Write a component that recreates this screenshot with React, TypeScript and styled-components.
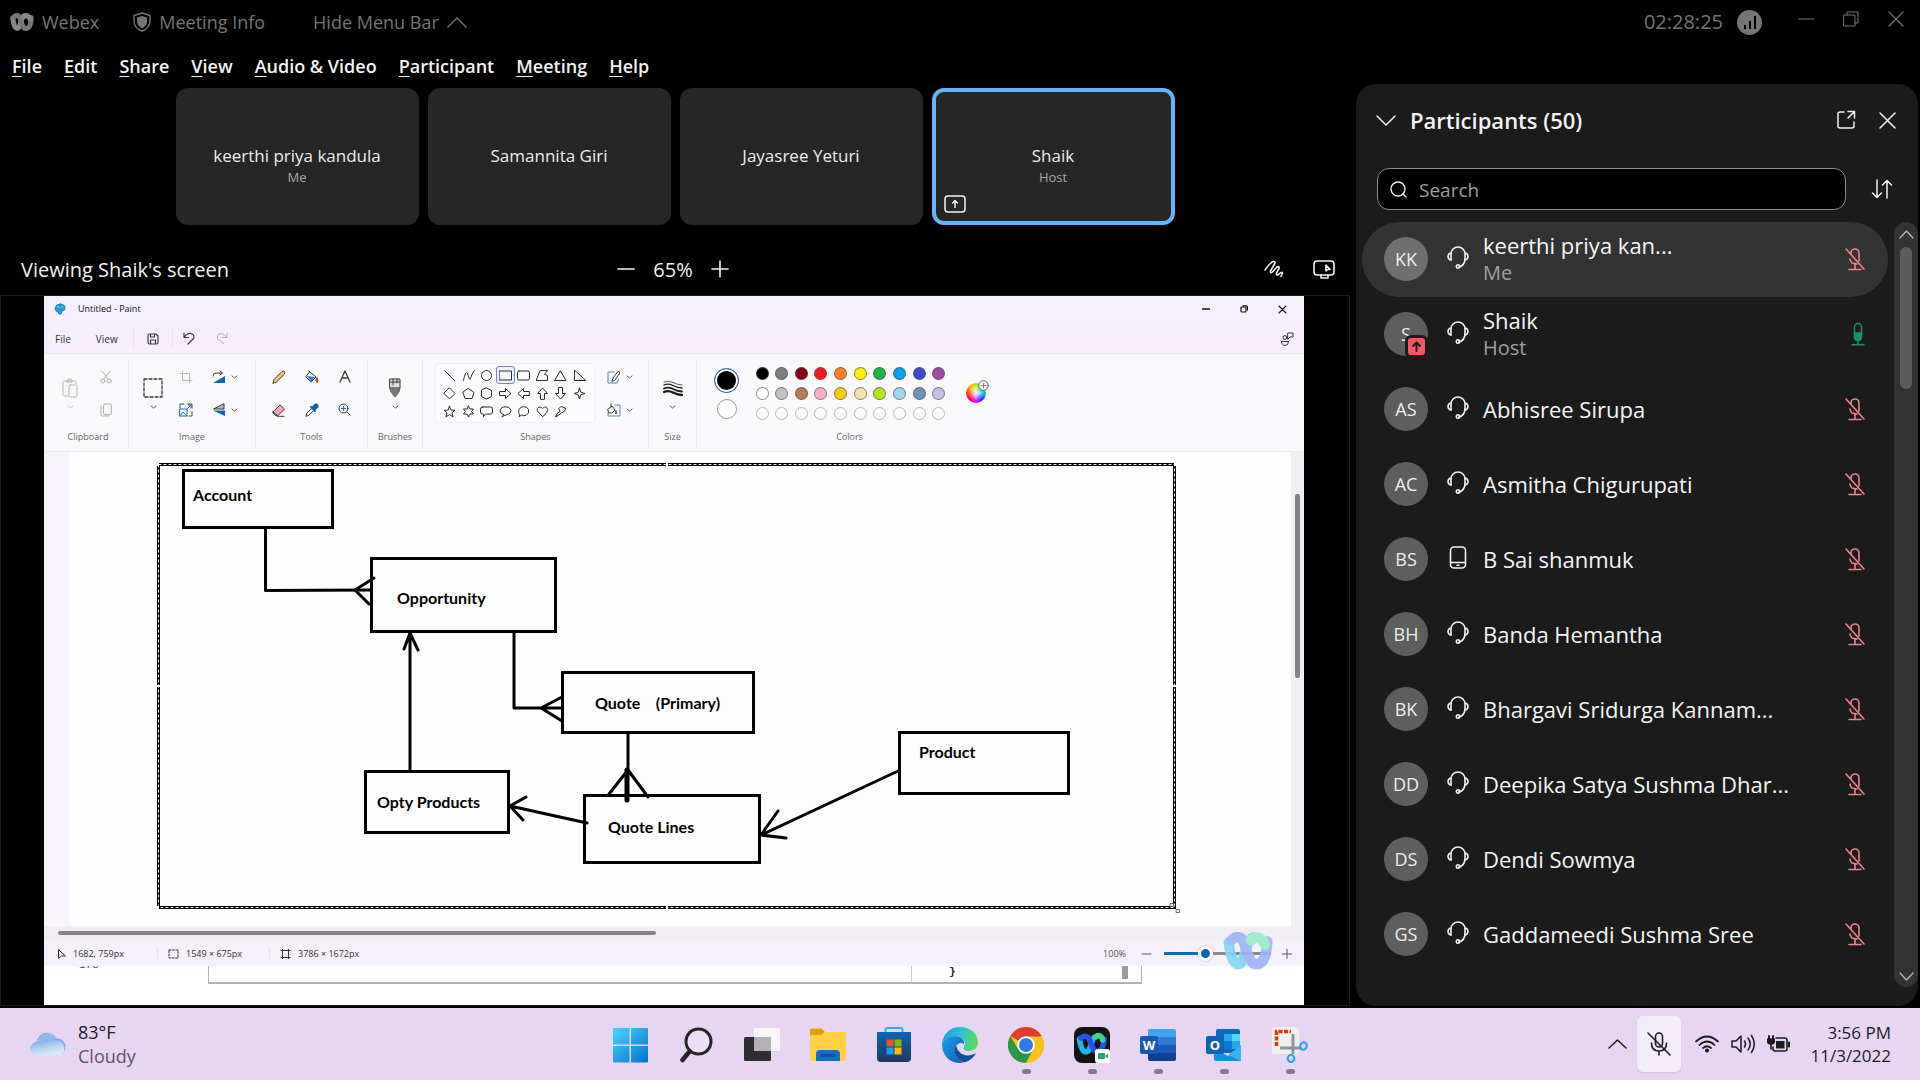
import React from 'react';
import styled, { createGlobalStyle } from 'styled-components';

const GlobalStyle = createGlobalStyle`
  *, *::before, *::after { box-sizing: border-box; }
  body { margin: 0; background: #000; font-family: "Open Sans", "Noto Sans", sans-serif; }
  button { font: inherit; color: inherit; background: none; border: 0; padding: 0; margin: 0; cursor: pointer; }
  svg { display: block; flex: none; }
  ul { list-style: none; margin: 0; padding: 0; }
`;

/* ---------- icons ---------- */

type IconProps = {
  w: number;
  h?: number;
  box?: string;
  sw?: number;
  color?: string;
  children: React.ReactNode;
};

const Icon = ({ w, h = w, box, sw = 1, color = 'currentColor', children }: IconProps) => (
  <svg
    width={w}
    height={h}
    viewBox={box ?? `0 0 ${w} ${h}`}
    fill="none"
    stroke={color}
    strokeWidth={sw}
    strokeLinecap="round"
    strokeLinejoin="round"
    aria-hidden="true"
  >
    {children}
  </svg>
);

const Chevron = ({ w, h, up, sw = 1 }: { w: number; h: number; up?: boolean; sw?: number }) => (
  <Icon w={w} h={h} sw={sw}>
    <path d={up ? `M1 ${h - 1}L${w / 2} 1L${w - 1} ${h - 1}` : `M1 1L${w / 2} ${h - 1}L${w - 1} 1`} />
  </Icon>
);

const Cross = ({ s, sw = 1 }: { s: number; sw?: number }) => (
  <Icon w={s} sw={sw}>
    <path d={`M1 1L${s - 1} ${s - 1}M${s - 1} 1L1 ${s - 1}`} />
  </Icon>
);

const WebexMark = ({ size, flat }: { size: number; flat?: boolean }) => (
  <svg width={size} height={(size * 3) / 4} viewBox="0 0 48 36" fill="none" strokeWidth="10" strokeLinecap="round" aria-hidden="true">
    <path d="M5.500 10C7 24 10 31 15 31C21 31 22 5 30 5" stroke={flat ? '#8a8a8a' : '#7ed8f5'} />
    <path d="M8 8C12 3 18 4 20 10C24 22 26 31 32 31C39 31 42 22 42.500 9" stroke={flat ? '#777' : '#9db4fa'} />
    <path d="M27 8C30 4 37 4 40 12" stroke={flat ? '#8a8a8a' : '#98eec8'} />
  </svg>
);

const HeadsetIcon = () => (
  <Icon w={22} h={24} sw={1.6} color="#f2f2f2">
    <path d="M4 15V9a7 7 0 0 1 14 0v4c0 5-2 8-6 9" />
    <path d="M4 8c-4 1-4 6 0 7M18 8c4 1 4 6 0 7" />
    <circle cx="11" cy="21.500" r="1.700" />
  </Icon>
);

const PhoneIcon = () => (
  <Icon w={22} h={24} sw={1.6} color="#f2f2f2">
    <rect x="3.500" y="2" width="15" height="21" rx="3.500" />
    <path d="M4 17.500h14M10 20.300h2" />
  </Icon>
);

const MicOffIcon = () => (
  <Icon w={22} h={24} sw={1.6} color="#f0808c">
    <path d="M2 2L20 22M7 7V6a4 4 0 0 1 8 0v8M6 12c0 2 1 3 2 4l5 1M11 17v5M5 22.500h12" />
  </Icon>
);

const MicOnIcon = () => (
  <Icon w={16} h={24} sw={1.5} color="#1c8f67">
    <rect x="4.500" y="1.500" width="7" height="17" rx="3.500" />
    <path d="M4.500 11h7v4a3.500 3.500 0 0 1-7 0z" fill="#1c8f67" />
    <path d="M8 18.500v4M2 22.800h12" />
  </Icon>
);

/* ---------- meeting shell ---------- */

const Shell = styled.div`
  min-height: 100vh;
  display: flex;
  flex-direction: column;
  background: #000;
  color: #f2f2f2;
`;

const TitleBar = styled.header`
  height: 48px;
  padding: 0 16px 4px 10px;
  display: flex;
  align-items: center;
  color: #757575;
  font-size: 18px;
`;

const TitleItem = styled.button<{ $gap: number }>`
  display: flex;
  align-items: center;
  gap: 8px;
  margin-right: ${(p) => p.$gap}px;
`;

const Clock = styled.time`
  margin-left: auto;
  font-size: 20px;
  line-height: 24px;
`;

const WindowButtons = styled.div`
  display: flex;
  gap: 29px;
  margin-left: 36px;
  padding-bottom: 6px;
  button { display: grid; place-items: center; }
`;

const Signal = styled.span`
  width: 25px;
  height: 25px;
  margin-left: 14px;
  padding-bottom: 6px;
  border-radius: 50%;
  background: #757575;
  display: flex;
  justify-content: center;
  align-items: flex-end;
  gap: 3px;
`;

const SignalBar = styled.i<{ $h: number }>`
  width: 2px;
  height: ${(p) => p.$h}px;
  background: #000;
`;

const MenuBar = styled.nav`
  height: 36px;
  padding: 0 12px;
  display: flex;
  align-items: center;
  gap: 22px;
  font-size: 18px;
  font-weight: 600;
`;

const Hot = styled.span`
  text-decoration: underline;
  text-underline-offset: 3px;
`;

const Body = styled.div`
  flex: 1;
  display: flex;
  gap: 6px;
  padding: 0 2px 2px 0;
`;

const Stage = styled.main`
  flex: 1;
  min-width: 0;
  display: flex;
  flex-direction: column;
`;

const Strip = styled.ul`
  display: flex;
  justify-content: center;
  gap: 9px;
  padding-top: 4px;
`;

const Tile = styled.li<{ $active?: boolean }>`
  position: relative;
  width: 243px;
  height: 137px;
  padding-bottom: 2px;
  border-radius: 12px;
  border: 4px solid ${(p) => (p.$active ? '#64b4fa' : '#262626')};
  background: #262626;
  display: flex;
  flex-direction: column;
  align-items: center;
  justify-content: center;
`;

const TileName = styled.span`
  font-size: 17px;
  line-height: 22px;
  font-weight: 500;
  color: #ededed;
`;

const TileRole = styled.span`
  height: 0;
  font-size: 13px;
  line-height: 20px;
  font-weight: 500;
  color: #a8a8a8;
`;

const TileBadge = styled.span`
  position: absolute;
  left: 8px;
  bottom: 8px;
`;

const ViewBar = styled.div`
  height: 70px;
  padding: 18px 15px 0 21px;
  display: grid;
  grid-template-columns: 1fr auto 1fr;
  align-items: center;
  font-size: 20px;
  font-weight: 500;
`;

const ZoomGroup = styled.div`
  display: flex;
  align-items: center;
  gap: 18px;
  margin-right: 10px;
`;

const ViewTools = styled.div`
  display: flex;
  justify-content: flex-end;
  align-items: center;
  gap: 29px;
`;

const ShareFrame = styled.section`
  flex: 1;
  border: 1px solid #1a1a1a;
  padding: 0 45px 0 43px;
  display: flex;
`;

/* ---------- paint window ---------- */

const Paint = styled.div`
  flex: 1;
  min-width: 0;
  display: flex;
  flex-direction: column;
  background: #fff;
  color: #333;
  font-size: 9px;
  line-height: 12px;
`;

const PaintTitle = styled.div`
  height: 26px;
  padding: 0 17px 0 10px;
  display: flex;
  align-items: center;
  gap: 12px;
  background: #f6f0fc;
  color: #111;
`;

const PaintWindowButtons = styled.div`
  margin-left: auto;
  display: flex;
  align-items: center;
  gap: 30px;
`;

const PaintMenu = styled.div`
  height: 32px;
  padding: 2px 10px 0 11px;
  display: flex;
  align-items: center;
  background: #f6eefa;
  border-bottom: 1px solid #ebe3ee;
`;

const PaintTab = styled.button`
  margin-right: 25px;
  font-size: 10px;
`;

const QuickButton = styled.button<{ $dim?: boolean }>`
  width: 33px;
  height: 20px;
  display: grid;
  place-items: center;
  color: ${(p) => (p.$dim ? '#b5aeb8' : '#3f3a42')};
`;

const SaveButton = styled(QuickButton)`
  width: 40px;
  margin-left: -10px;
  border: solid #eae1ef;
  border-width: 0 1px;
`;

const Push = styled.button`
  margin-left: auto;
`;

const Ribbon = styled.div`
  height: 98px;
  padding-top: 6px;
  display: flex;
  background: #f9f8fa;
  border-bottom: 1px solid #ecebf0;
`;

const Group = styled.section<{ $w: number; $pad?: number; $last?: boolean }>`
  width: ${(p) => p.$w}px;
  height: 88px;
  padding-left: ${(p) => p.$pad ?? 0}px;
  display: flex;
  flex-direction: column;
  align-items: center;
  border-right: 1px solid ${(p) => (p.$last ? 'transparent' : '#ebebee')};
`;

const GroupTools = styled.div`
  height: 66px;
  display: flex;
  align-items: center;
  justify-content: center;
`;

const GroupLabel = styled.span`
  line-height: 22px;
  color: #666;
`;

const ToolColumn = styled.div<{ $w: number }>`
  width: ${(p) => p.$w}px;
  display: grid;
  grid-auto-rows: 33px;
`;

const Tool = styled.button<{ $dim?: boolean }>`
  display: flex;
  align-items: center;
  justify-content: center;
  gap: 5px;
  color: ${(p) => (p.$dim ? '#b4b4b4' : '#3a3a3a')};
`;

const BigTool = styled(Tool)<{ $w: number }>`
  width: ${(p) => p.$w}px;
  flex-direction: column;
  gap: 7px;
`;

const ShapeBox = styled.div`
  width: 160px;
  height: 60px;
  margin-right: 8px;
  padding: 2px 5px 4px;
  display: grid;
  grid-template-columns: repeat(8, 1fr);
  grid-auto-rows: 18px;
  border: 1px solid #f0eef2;
  border-radius: 3px;
  background: #fcfbfd;
`;

const ShapeButton = styled.button<{ $on?: boolean }>`
  display: grid;
  place-items: center;
  color: #2d2d2d;
  border-radius: 3px;
  border: 1px solid ${(p) => (p.$on ? '#6f86bd' : 'transparent')};
  background: ${(p) => (p.$on ? '#eef2fb' : 'transparent')};
`;

const ActiveColors = styled.div`
  width: 26px;
  margin-right: 16px;
  display: flex;
  flex-direction: column;
  align-items: center;
  gap: 6px;
`;

const ActiveColor = styled.button<{ $c: string; $main?: boolean }>`
  width: ${(p) => (p.$main ? 25 : 20)}px;
  height: ${(p) => (p.$main ? 25 : 20)}px;
  border-radius: 50%;
  border: 1px solid ${(p) => (p.$main ? '#3f6fb4' : '#9a9a9a')};
  background: ${(p) => p.$c};
  box-shadow: ${(p) => (p.$main ? 'inset 0 0 0 2px #fff' : 'none')};
`;

const Palette = styled.div`
  width: 190px;
  margin-right: 20px;
  display: grid;
  grid-template-columns: repeat(10, 13px);
  grid-auto-rows: 13px;
  justify-content: space-between;
  row-gap: 7px;
`;

const Swatch = styled.button<{ $c?: string }>`
  border-radius: 50%;
  border: 1px solid ${(p) => (p.$c ? 'rgba(80, 80, 80, 0.65)' : '#b9b9b9')};
  background: ${(p) => p.$c ?? '#fbfafc'};
`;

const Wheel = styled.button`
  position: relative;
  width: 20px;
  height: 20px;
  border-radius: 50%;
  background: radial-gradient(#fff, transparent 60%),
    conic-gradient(#b6f000, #00e070, #00b8ff, #2030ff, #e000ff, #ff0060, #ff3000, #ffb000, #b6f000);
  svg { position: absolute; right: -3px; top: -3px; }
`;

const Workspace = styled.div`
  flex: 1;
  display: flex;
  padding-left: 26px;
  background: #f7f5fb;
`;

const Canvas = styled.div`
  position: relative;
  flex: 1;
  overflow: hidden;
  background: #fdfdfd;
  font-family: Lato, "Open Sans", sans-serif;
  font-size: 16px;
  line-height: 18px;
  font-weight: 700;
  color: #000;
`;

const Ink = styled.svg`
  position: absolute;
  left: 0;
  top: 0;
`;

const Entity = styled.div<{ $x: number; $y: number; $w: number; $h: number; $px: number; $py: number }>`
  position: absolute;
  left: ${(p) => p.$x}px;
  top: ${(p) => p.$y}px;
  width: ${(p) => p.$w}px;
  height: ${(p) => p.$h}px;
  padding: ${(p) => p.$py}px 0 0 ${(p) => p.$px}px;
  border: 3px solid #000;
  white-space: pre;
`;

const VerticalScroll = styled.div`
  width: 13px;
  padding: 42px 4px 0;
  background: #f0eef2;
  &::before { content: ''; display: block; height: 184px; border-radius: 2px; background: #858387; }
`;

const HorizontalScroll = styled.div`
  height: 15px;
  padding: 5px 14px;
  background: #f0eef2;
  &::before { content: ''; display: block; width: 598px; height: 4px; border-radius: 2px; background: #858387; }
`;

const StatusBar = styled.footer`
  position: relative;
  height: 25px;
  padding: 0 12px 0 13px;
  display: flex;
  align-items: center;
  background: #f6f0fb;
`;

const Status = styled.span<{ $w: number; $last?: boolean }>`
  width: ${(p) => p.$w}px;
  height: 12px;
  margin-right: 10px;
  display: flex;
  align-items: center;
  gap: 7px;
  border-right: 1px solid ${(p) => (p.$last ? 'transparent' : '#e6deeb')};
`;

const ZoomRow = styled.label`
  margin-left: auto;
  display: flex;
  align-items: center;
  gap: 11px;
  color: #555;
`;

const Slider = styled.input`
  appearance: none;
  width: 107px;
  height: 14px;
  margin: 0;
  background: linear-gradient(90deg, #0f6cc4 40%, #8a888c 40%) center / 100% 3px no-repeat;
  &::-webkit-slider-thumb {
    appearance: none;
    width: 15px;
    height: 15px;
    border-radius: 50%;
    border: 3px solid #fff;
    background: #0a62bd;
    box-shadow: 0 0 2px #aaa;
  }
`;

const Watermark = styled.span`
  position: absolute;
  right: 31px;
  top: -9px;
  opacity: 0.9;
`;

const Behind = styled.div`
  height: 39px;
  display: flex;
  overflow: hidden;
  color: #555;
  font-family: "Liberation Mono", monospace;
  font-size: 11px;
`;

const LineNo = styled.span`
  width: 164px;
  margin-top: -7px;
  padding-left: 35px;
`;

const EditorPane = styled.div`
  width: 934px;
  height: 18px;
  padding-right: 13px;
  border: solid #b2b2b2;
  border-width: 0 1px 2px;
  display: flex;
`;

const EditorLeft = styled.div`
  flex: 1;
  border-right: 1px solid #c9ced6;
`;

const EditorRight = styled.div`
  width: 216px;
  padding-left: 37px;
  display: flex;
  justify-content: space-between;
  font-weight: 700;
  color: #222;
  &::after { content: ''; width: 6px; height: 13px; background: #9c9c9c; }
`;

/* ---------- participants ---------- */

const Panel = styled.aside`
  width: 562px;
  display: flex;
  flex-direction: column;
  border-radius: 20px;
  background: #1b1b1b;
`;

const PanelHead = styled.div`
  height: 74px;
  padding: 0 22px 2px 20px;
  display: flex;
  align-items: center;
  gap: 14px;
`;

const PanelTitle = styled.h2`
  margin: 0;
  flex: 1;
  font-size: 22px;
  line-height: 28px;
  font-weight: 600;
`;

const PanelActions = styled.div`
  display: flex;
  align-items: center;
  gap: 23px;
`;

const SearchRow = styled.div`
  padding: 10px 25px 12px 21px;
  display: flex;
  align-items: center;
  gap: 25px;
`;

const SearchBox = styled.label`
  flex: 1;
  height: 42px;
  padding: 0 12px;
  display: flex;
  align-items: center;
  gap: 12px;
  border: 1px solid #8c8c8c;
  border-radius: 12px;
  background: #000;
`;

const SearchInput = styled.input`
  flex: 1;
  min-width: 0;
  padding: 2px 0 0;
  border: 0;
  outline: 0;
  background: none;
  color: #fff;
  font: 400 19px/26px "Open Sans", sans-serif;
  &::placeholder { color: #a0a0a0; opacity: 1; }
`;

const ListArea = styled.div`
  flex: 1;
  display: flex;
  gap: 6px;
  padding: 0 0 19px 6px;
`;

const People = styled.ul`
  flex: 1;
`;

const Person = styled.li<{ $me?: boolean }>`
  height: 75px;
  padding: 0 22px 1px;
  display: flex;
  align-items: center;
  border-radius: 38px;
  background: ${(p) => (p.$me ? '#333' : 'transparent')};
`;

const Avatar = styled.span<{ $me?: boolean }>`
  position: relative;
  width: 44px;
  height: 44px;
  margin-right: 19px;
  border-radius: 50%;
  display: grid;
  place-items: center;
  font-size: 18px;
  color: #ededed;
  background: ${(p) => (p.$me ? '#6f6f6f' : '#5e5e5e')};
`;

const Sharing = styled.span`
  position: absolute;
  left: 21px;
  top: 23px;
  width: 23px;
  height: 23px;
  display: grid;
  place-items: center;
  border-radius: 6px;
  border: 3px solid #1b1b1b;
  background: #fa5566;
`;

const Device = styled.span`
  margin-right: 14px;
  padding-bottom: 4px;
`;

const Who = styled.div`
  flex: 1;
  display: flex;
  flex-direction: column;
  font-size: 22px;
  line-height: 28px;
  color: #f5f5f5;
  small { font-size: 20px; color: #a0a0a0; }
`;

const ScrollTrack = styled.div`
  width: 24px;
  padding: 8px 6px 6px;
  display: flex;
  flex-direction: column;
  align-items: center;
  border-radius: 12px;
  background: #333;
  color: #bdbdbd;
`;

const ScrollThumb = styled.div`
  width: 12px;
  height: 142px;
  margin: 8px 0 auto;
  border-radius: 6px;
  background: #5c5c5c;
`;

/* ---------- taskbar ---------- */

const Taskbar = styled.footer`
  height: 72px;
  padding: 0 29px;
  display: grid;
  grid-template-columns: 1fr auto 1fr;
  align-items: center;
  background: #e8d5f4;
  color: #1c1c1c;
  font-size: 17px;
  line-height: 23px;
`;

const Weather = styled.button`
  display: flex;
  align-items: center;
  gap: 12px;
  text-align: left;
  font-size: 18px;
  line-height: 24px;
  span { display: block; color: #5d5663; }
  span:first-child { color: #1c1c1c; }
`;

const Apps = styled.div`
  display: flex;
  gap: 30px;
`;

const AppButton = styled.button<{ $open?: boolean }>`
  width: 36px;
  height: 72px;
  padding-top: 19px;
  display: flex;
  flex-direction: column;
  align-items: center;
  gap: 6px;
  &::after {
    content: '';
    width: 9px;
    height: 5px;
    border-radius: 3px;
    background: ${(p) => (p.$open ? '#857990' : 'transparent')};
  }
`;

const Tray = styled.div`
  display: flex;
  justify-content: flex-end;
  align-items: center;
`;

const TrayButton = styled.button<{ $w: number; $on?: boolean }>`
  width: ${(p) => p.$w}px;
  height: 56px;
  margin-right: ${(p) => (p.$on ? 8 : 0)}px;
  display: grid;
  place-items: center;
  border-radius: 6px;
  background: ${(p) => (p.$on ? '#f3eafa' : 'transparent')};
  box-shadow: ${(p) => (p.$on ? '0 1px 2px #cfbfdb' : 'none')};
`;

const DateTime = styled.time`
  width: 94px;
  text-align: right;
`;

/* ---------- data ---------- */

const menus = ['File', 'Edit', 'Share', 'View', 'Audio & Video', 'Participant', 'Meeting', 'Help'];

const tiles = [
  { name: 'keerthi priya kandula', role: 'Me' },
  { name: 'Samannita Giri' },
  { name: 'Jayasree Yeturi' },
  { name: 'Shaik', role: 'Host', active: true },
];

const people = [
  { id: 'KK', name: 'keerthi priya kan...', role: 'Me' },
  { id: 'S', name: 'Shaik', role: 'Host', live: true },
  { id: 'AS', name: 'Abhisree Sirupa' },
  { id: 'AC', name: 'Asmitha Chigurupati' },
  { id: 'BS', name: 'B Sai shanmuk', phone: true },
  { id: 'BH', name: 'Banda Hemantha' },
  { id: 'BK', name: 'Bhargavi Sridurga Kannam...' },
  { id: 'DD', name: 'Deepika Satya Sushma Dhar...' },
  { id: 'DS', name: 'Dendi Sowmya' },
  { id: 'GS', name: 'Gaddameedi Sushma Sree' },
];

const palette: (string | undefined)[] = [
  '#000000', '#7f7f7f', '#880015', '#ed1c24', '#ff7f27', '#fff200', '#22b14c', '#00a2e8', '#3f48cc', '#a349a4',
  '#ffffff', '#c3c3c3', '#b97a57', '#ffaec9', '#ffc90e', '#efe4b0', '#b5e61d', '#99d9ea', '#7092be', '#c8bfe7',
  ...Array(10).fill(undefined),
];

const shapes = [
  ['Line', 'M1 1L11 11'],
  ['Curve', 'M1 11C2 5 4 1 5 4S7 12 8 9S10 3 12 1'],
  ['Oval', 'M6 1a5 5 0 1 0 .01 0z'],
  ['Rectangle', 'M0 1.500h12v9H0z'],
  ['Rounded rectangle', 'M1.500 1.500h9q1.500 0 1.500 1.500v6q0 1.500-1.500 1.500h-9Q0 10.500 0 9V3q0-1.500 1.500-1.500z'],
  ['Polygon', 'M4 1h7L8 5l3 1v5H0z'],
  ['Triangle', 'M6 1.500L11.500 11H.5z'],
  ['Right triangle', 'M1 1v10h11z'],
  ['Diamond', 'M6 .5L11.500 6L6 11.500L.5 6z'],
  ['Pentagon', 'M6 1l5.500 4L9.500 11h-7L.5 5z'],
  ['Hexagon', 'M6 .5l5 2.500v6L6 11.500L1 9v-6z'],
  ['Right arrow', 'M.5 4H6V1l5.500 5L6 11V8H.5z'],
  ['Left arrow', 'M11.500 4H6V1L.5 6L6 11V8h5.500z'],
  ['Up arrow', 'M4 11.500V6H1L6 .5L11 6H8v5.500z'],
  ['Down arrow', 'M4 .5V6H1l5 5.500L11 6H8V.5z'],
  ['Four-point star', 'M6 .5L7.300 4.700L11.500 6L7.300 7.300L6 11.500L4.700 7.300L.5 6L4.700 4.700z'],
  ['Five-point star', 'M6 .8L7.500 4.500L11.500 4.800L8.400 7.300L9.500 11.300L6 9L2.500 11.300L3.600 7.300L.5 4.800L4.500 4.500z'],
  ['Six-point star', 'M6 .5L7.500 3.500H11L9 6L11 8.500H7.500L6 11.500L4.500 8.500H1L3 6L1 3.500H4.500z'],
  ['Rounded callout', 'M2 1.500h8q2 0 2 2v3q0 2-2 2H5l-2 2.500V8.500H2q-2 0-2-2v-3q0-2 2-2z'],
  ['Oval callout', 'M4 9A5.500 4 0 1 1 7 9.200L3 11z'],
  ['Cloud callout', 'M2 9Q0 7 1.500 4Q3 1 6 1.200Q10 1 11 4Q12 8 9 9.500Q6 11 4 9.500L2 11z'],
  ['Heart', 'M6 11L1.500 6.500C-1 3 3 -.5 6 3C9 -.5 13 3 10.500 6.500z'],
  ['Lightning', 'M7 1l4.500 2L9.500 6L7 7.500L5 9L1 11.500L3 7.500L5.500 6L4.500 3.500z'],
];

const ink = [
  'M195.500 77V138.500L300 138',
  'M304 126L285 138L299 152',
  'M340 318V181M334 197L340 181L348 198',
  'M444 181V256H492M492 245L471 256L492 269',
  'M558 282V318L539 342M558 318L578 345',
  'M517 371L440 354M456 345L440 354L453 368',
  'M828 319L691 383M708 359L691 383L716 386',
];

/* ---------- app icons ---------- */

const CloudIcon = () => (
  <svg width="37" height="24" viewBox="0 0 37 24" aria-hidden="true">
    <defs>
      <linearGradient id="cloud" x1="0" y1="0" x2=".4" y2="1">
        <stop stopColor="#6c9fec" /><stop offset=".6" stopColor="#b8d2f3" /><stop offset="1" stopColor="#d9e8f8" />
      </linearGradient>
    </defs>
    <circle cx="18" cy="11" r="10.500" fill="#8fb6ef" />
    <circle cx="28" cy="15" r="8.500" fill="#7fa7e8" />
    <path d="M8 23.500a7 7 0 1 1 4-13Q16 5 22 9Q30 6 34 12Q38 20 31 23.500z" fill="url(#cloud)" />
  </svg>
);

const WindowsIcon = () => (
  <svg width="36" height="36" viewBox="0 0 36 36" aria-hidden="true">
    <defs>
      <linearGradient id="win" x1="0" y1="0" x2="1" y2="1" gradientUnits="objectBoundingBox">
        <stop stopColor="#4ed2ff" /><stop offset="1" stopColor="#0073d2" />
      </linearGradient>
    </defs>
    <path d="M2 1h15.500v16.500H1V2q0-1 1-1zM19 1h16q1 0 1 1v15.500H19zM1 19h16.500v16.500H2q-1 0-1-1zM19 19h17v15.500q0 1-1 1H19z" fill="url(#win)" />
  </svg>
);

const FindIcon = () => (
  <svg width="36" height="36" viewBox="0 0 36 36" fill="none" stroke="#252525" aria-hidden="true">
    <circle cx="20.500" cy="14.500" r="12.500" strokeWidth="3" fill="#ecdff5" />
    <path d="M11.500 24.500L4.500 33" strokeWidth="4.500" strokeLinecap="round" />
  </svg>
);

const TaskViewIcon = () => (
  <svg width="36" height="36" viewBox="0 0 36 36" aria-hidden="true">
    <rect x="10" y="1" width="26" height="23" rx="1.500" fill="#f7f5f8" />
    <rect x="0" y="10" width="27" height="24" rx="1.500" fill="#2f2d30" />
    <rect x="10" y="10" width="17" height="14" fill="#b4b1b6" />
  </svg>
);

const FolderIcon = () => (
  <svg width="36" height="36" viewBox="0 0 36 36" aria-hidden="true">
    <path d="M0 3q0-1.500 1.500-1.500h10L15 5h20v10H0z" fill="#dfa00a" />
    <path d="M0 9q0-1 1-1h10l3-3h21q1 0 1 1v26q0 2-2 2H2q-2 0-2-2z" fill="#ffcf44" />
    <path d="M6 34V27q0-4 4-4h16q4 0 4 4v7z" fill="#1270c8" />
    <rect x="10" y="27" width="16" height="3" rx="1.500" fill="#0a4e96" />
  </svg>
);

const StoreIcon = () => (
  <svg width="36" height="36" viewBox="0 0 36 36" aria-hidden="true">
    <defs>
      <linearGradient id="store" x1="0" y1="0" x2="0" y2="1"><stop stopColor="#0c65b4" /><stop offset="1" stopColor="#22375e" /></linearGradient>
    </defs>
    <path d="M9.500 6V3q0-2 2-2h13q2 0 2 2v3" fill="none" stroke="#22b2f0" strokeWidth="2" />
    <path d="M1 5h34v26q0 4-4 4H5q-4 0-4-4z" fill="url(#store)" />
    <path d="M10.500 12.500h7v7h-7z" fill="#f25022" /><path d="M18.500 12.500h7v7h-7z" fill="#7fba00" />
    <path d="M10.500 20.500h7v7h-7z" fill="#00a4ef" /><path d="M18.500 20.500h7v7h-7z" fill="#ffb900" />
  </svg>
);

const EdgeIcon = () => (
  <svg width="36" height="36" viewBox="0 0 36 36" aria-hidden="true">
    <defs>
      <linearGradient id="edgeTop" x1="0" y1=".4" x2="1" y2=".6"><stop stopColor="#1f9fe0" /><stop offset=".5" stopColor="#2fc3d0" /><stop offset="1" stopColor="#62dc55" /></linearGradient>
      <linearGradient id="edgeSide" x1="0" y1="0" x2="1" y2="1"><stop stopColor="#1ba0e8" /><stop offset="1" stopColor="#0c5bb8" /></linearGradient>
    </defs>
    <path d="M0 17C1 6 9 0 18 0C29 0 36 7 36 15C36 21 32 24 27 24C22 24 21 22 22 20C25 14 20 9 14 9C7 9 2 12 0 17z" fill="url(#edgeTop)" />
    <path d="M0 17C2 12 7 9 13 9C19 9 23 13 22 17C18 14 12 18 13 25C14 31 18 35 23 35C10 39 0 30 0 17z" fill="url(#edgeSide)" />
    <path d="M14 18C10 25 16 36 24 35C29 33 32 30 34 26C24 32 15 26 14 18z" fill="#124f9c" />
  </svg>
);

const ChromeIcon = () => (
  <svg width="36" height="36" viewBox="0 0 36 36" aria-hidden="true">
    <circle cx="18" cy="18" r="18" fill="#fbc116" />
    <path d="M18 18L2.400 9A18 18 0 0 1 33.600 9z" fill="#e33b2e" />
    <path d="M2.400 9A18 18 0 0 0 18 36L26 22L18 18L10 22z" fill="#279847" />
    <path d="M18 9.500H33.800A18 18 0 0 1 18 36L25.500 22z" fill="#fbc116" />
    <circle cx="18" cy="18" r="8.800" fill="#fff" /><circle cx="18" cy="18" r="7" fill="#2b7bea" />
  </svg>
);

const WebexAppIcon = () => (
  <svg width="36" height="36" viewBox="0 0 36 36" aria-hidden="true">
    <rect width="36" height="36" rx="8" fill="#141414" />
    <g fill="none" strokeWidth="5.500" strokeLinecap="round">
      <path d="M5.500 12C7 22 9 25 12 25C17 25 17 10 22 10" stroke="#1fb6e6" />
      <path d="M7 11C10 8 14 9 15.500 13C18 20 20 25 24 25C28 23 30 17 30 12" stroke="#2a50f0" />
      <path d="M21 10C25 7 28 9 28.500 13" stroke="#43d08a" />
    </g>
    <rect x="21" y="22" width="15" height="14" rx="3" fill="#fff" />
    <rect x="24" y="26" width="7" height="6" rx="1" fill="#21a375" /><path d="M31 29l3-2.500v5z" fill="#21a375" />
  </svg>
);

const OfficeTag = styled.svg`
  font-family: "Open Sans", sans-serif;
  font-weight: 700;
  font-size: 13px;
`;

const WordIcon = () => (
  <OfficeTag width="36" height="36" viewBox="0 0 36 36" aria-hidden="true">
    <path d="M9 2h25q2 0 2 2v6H8V4q0-2 1-2z" fill="#41a5ee" /><path d="M8 10h28v8H8z" fill="#2b7cd3" />
    <path d="M8 18h28v8H8z" fill="#185abd" /><path d="M8 26h28v6q0 2-2 2H10q-2 0-2-2z" fill="#103f91" />
    <rect y="9" width="18" height="18" rx="2" fill="#1a56b5" /><text x="9" y="23" textAnchor="middle" fill="#fff">W</text>
  </OfficeTag>
);

const OutlookIcon = () => (
  <OfficeTag width="36" height="36" viewBox="0 0 36 36" aria-hidden="true">
    <rect x="10" y="2" width="24" height="24" rx="2" fill="#0f68ba" /><path d="M18 7h8v7h-8z" fill="#28a8ea" />
    <path d="M26 7h8v7h-8z" fill="#50d9ff" /><path d="M18 14h8v8h-8z" fill="#0f78d4" /><path d="M26 14h8v8h-8z" fill="#28a8ea" />
    <path d="M8 21L22 29L35 18v14q0 2-2 2H10q-2 0-2-2z" fill="#1790dd" /><path d="M22 28L35 18v16z" fill="#35b4ef" />
    <rect y="9" width="18" height="18" rx="2" fill="#0f62b4" /><text x="9" y="23" textAnchor="middle" fill="#fff">O</text>
  </OfficeTag>
);

const SnipIcon = () => (
  <svg width="36" height="36" viewBox="0 0 36 36" fill="none" aria-hidden="true">
    <rect width="27" height="27" rx="3" fill="#f1efee" />
    <path d="M4.500 19V4.500H19" stroke="#d83b01" strokeWidth="3.500" strokeDasharray="4 1.500" />
    <path d="M21 7v20M8 21h20" stroke="#8b949c" strokeWidth="3" />
    <ellipse cx="31.500" cy="19" rx="3.200" ry="3.800" stroke="#2aa4e8" strokeWidth="2.200" transform="rotate(20 31.500 19)" />
    <ellipse cx="19" cy="31.500" rx="3.200" ry="3.500" stroke="#2aa4e8" strokeWidth="2.200" />
  </svg>
);

const apps: [string, React.ReactNode, boolean][] = [
  ['Start', <WindowsIcon />, false],
  ['Search', <FindIcon />, false],
  ['Task view', <TaskViewIcon />, false],
  ['File Explorer', <FolderIcon />, false],
  ['Microsoft Store', <StoreIcon />, false],
  ['Edge', <EdgeIcon />, false],
  ['Chrome', <ChromeIcon />, true],
  ['Webex', <WebexAppIcon />, true],
  ['Word', <WordIcon />, true],
  ['Outlook', <OutlookIcon />, true],
  ['Snipping Tool', <SnipIcon />, true],
];

/* ---------- sections ---------- */

const Dropdown = () => <Chevron w={7} h={4} sw={0.8} />;

const PaintRibbon = () => (
  <Ribbon>
    <Group $w={85} $pad={4}>
      <GroupTools>
        <BigTool $w={36} $dim aria-label="Paste">
          <Icon w={16} h={20}>
            <path d="M6 18H2.500Q1 18 1 16.500V4Q1 3 2.500 3H13Q14 3 14 4V6M5 3q0-2 2.500-2T10 3v1H5z" />
            <rect x="7" y="7" width="8" height="12" rx="1.500" />
          </Icon>
          <Dropdown />
        </BigTool>
        <ToolColumn $w={36}>
          <Tool $dim aria-label="Cut">
            <Icon w={12} h={14}><path d="M2 1L8.500 9.500M10 1L3.500 9.500" /><circle cx="2.800" cy="11" r="2" /><circle cx="9.200" cy="11" r="2" /></Icon>
          </Tool>
          <Tool $dim aria-label="Copy">
            <Icon w={12} h={14}><rect x="3.500" y="1" width="8" height="10.500" rx="1.500" /><path d="M1 3v8.500Q1 13 2.500 13H9" /></Icon>
          </Tool>
        </ToolColumn>
      </GroupTools>
      <GroupLabel>Clipboard</GroupLabel>
    </Group>
    <Group $w={127}>
      <GroupTools>
        <BigTool $w={36} aria-label="Select">
          <Icon w={20} h={20} sw={1.3}><rect x="1" y="1" width="18" height="18" strokeDasharray="3 2" /></Icon>
          <Dropdown />
        </BigTool>
        <ToolColumn $w={30}>
          <Tool $dim aria-label="Crop"><Icon w={14}><path d="M3.500 1v9.500H13M1 3.500h9.500V13" /></Icon></Tool>
          <Tool aria-label="Resize">
            <Icon w={14}><path d="M1 5V1h4M9 1h4v4M13 9v4h-3" strokeDasharray="2 1" /><rect x="1" y="6" width="7" height="7" stroke="#1a6fc0" /><path d="M1 13l3-4l4 4M8 6l4-4M9 2h3v3" stroke="#1a6fc0" /></Icon>
          </Tool>
        </ToolColumn>
        <ToolColumn $w={48}>
          <Tool aria-label="Rotate">
            <Icon w={14}><path d="M13 6v7H1z" fill="#0f62b8" stroke="none" /><path d="M1 6Q1 3 4 3h6M8 1l2.500 2L8 5" /></Icon><Dropdown />
          </Tool>
          <Tool aria-label="Flip">
            <Icon w={14}><path d="M12 1v5H2z" fill="#b9b9b9" /><path d="M13 13V7.500H1z" fill="#0f62b8" stroke="none" /></Icon><Dropdown />
          </Tool>
        </ToolColumn>
      </GroupTools>
      <GroupLabel>Image</GroupLabel>
    </Group>
    <Group $w={112}>
      <GroupTools>
        <ToolColumn $w={33}>
          <Tool aria-label="Pencil"><Icon w={14}><path d="M1 13L2 9.500L10 1.500Q12 .5 12.500 1.500T12.500 4L4.500 12z" fill="#f0c878" /></Icon></Tool>
          <Tool aria-label="Eraser"><Icon w={14}><path d="M1 9L8 2l4.500 4L6 12.500H4z" fill="#f7a8ae" /><path d="M1 9l4.500 3.500H4z" fill="#fff" /><path d="M5 13.300h7" /></Icon></Tool>
        </ToolColumn>
        <ToolColumn $w={33}>
          <Tool aria-label="Fill"><Icon w={14}><path d="M5 2l6 5l-5 5l-5-5z" fill="#fff" /><path d="M2 6l8 1l-4 5z" fill="#2e80cc" stroke="none" /><path d="M4 1l3 3" /><path d="M12 8q2 3 0 4.500Q9.500 11 12 8z" fill="#c8391c" stroke="#c8391c" /></Icon></Tool>
          <Tool aria-label="Color picker"><Icon w={14}><path d="M1 13L2 10L7 5L9 7L4 12z" fill="#fff" /><path d="M6 4L10 8M8 4l2.500-2.500Q13 1 12.500 4L10 6z" stroke="#0f62b8" fill="#0f62b8" strokeWidth="2" /></Icon></Tool>
        </ToolColumn>
        <ToolColumn $w={33}>
          <Tool aria-label="Text"><Icon w={12} h={13} sw={1.3}><path d="M1 12L6 1l5 11M3 8h6" /></Icon></Tool>
          <Tool aria-label="Magnifier"><Icon w={13}><circle cx="5.500" cy="5.500" r="4.500" /><path d="M9 9l3 3" /><path d="M3.500 5.500h4M5.500 3.500v4" stroke="#1a6fc0" /></Icon></Tool>
        </ToolColumn>
      </GroupTools>
      <GroupLabel>Tools</GroupLabel>
    </Group>
    <Group $w={55}>
      <GroupTools>
        <BigTool $w={36} aria-label="Brushes">
          <Icon w={12} h={20}><path d="M1 1h10v9H1zM1 4h10M4 1v6M8 1v4" fill="#ddd" /><path d="M1 10h10l-1 4l-4 5l-4-5z" fill="#777" stroke="#666" /></Icon>
          <Dropdown />
        </BigTool>
      </GroupTools>
      <GroupLabel>Brushes</GroupLabel>
    </Group>
    <Group $w={226}>
      <GroupTools>
        <ShapeBox>
          {shapes.map(([name, d]) => (
            <ShapeButton key={name} aria-label={name} $on={name === 'Rectangle'}>
              <Icon w={13} box="-0.500 -0.500 13 13"><path d={d} /></Icon>
            </ShapeButton>
          ))}
        </ShapeBox>
        <ToolColumn $w={34}>
          <Tool aria-label="Outline"><Icon w={14}><path d="M7 2H1v11h9l2-4" stroke="#4a86c0" /><path d="M5 11l1-3l5-6.500Q13 1 12.500 3.500L8 10z" /></Icon><Dropdown /></Tool>
          <Tool aria-label="Shape fill"><Icon w={14}><path d="M8 2h5v11H1V10" stroke="#4a86c0" /><path d="M4 1v3M1 6l4-3l3 4l-3 3H2zM9 8q2 2 0 3q-2-1 0-3z" /></Icon><Dropdown /></Tool>
        </ToolColumn>
      </GroupTools>
      <GroupLabel>Shapes</GroupLabel>
    </Group>
    <Group $w={48}>
      <GroupTools>
        <BigTool $w={36} aria-label="Size">
          <Icon w={20} h={20} color="#1b1b1b">
            <path d="M1 4Q5 2 10 4.500T19 7" strokeWidth=".7" /><path d="M1 7Q5 5 10 7.500T19 10" strokeWidth="1.300" />
            <path d="M1 10.500Q5 8.500 10 11T19 13.500" strokeWidth="1.800" /><path d="M1 14Q5 12 10 14.500T19 17" strokeWidth="2.300" />
          </Icon>
          <Dropdown />
        </BigTool>
      </GroupTools>
      <GroupLabel>Size</GroupLabel>
    </Group>
    <Group $w={306} $last>
      <GroupTools>
        <ActiveColors>
          <ActiveColor $c="#000" $main aria-label="Color 1" />
          <ActiveColor $c="#fff" aria-label="Color 2" />
        </ActiveColors>
        <Palette>
          {palette.map((c, i) => (
            <Swatch key={i} $c={c} aria-label={c ?? 'Empty color'} />
          ))}
        </Palette>
        <Wheel aria-label="Edit colors">
          <Icon w={11} color="#666"><circle cx="5.500" cy="5.500" r="4.800" fill="#fff" /><path d="M3 5.500h5M5.500 3v5" strokeWidth=".8" /></Icon>
        </Wheel>
      </GroupTools>
      <GroupLabel>Colors</GroupLabel>
    </Group>
  </Ribbon>
);

const Drawing = () => (
  <Canvas>
    <Entity $x={112} $y={17} $w={152} $h={60} $px={8} $py={14}>Account</Entity>
    <Entity $x={300} $y={105} $w={187} $h={76} $px={24} $py={29}>Opportunity</Entity>
    <Entity $x={491} $y={219} $w={194} $h={63} $px={31} $py={20}>{'Quote    (Primary)'}</Entity>
    <Entity $x={294} $y={318} $w={146} $h={64} $px={10} $py={20}>Opty Products</Entity>
    <Entity $x={513} $y={342} $w={178} $h={70} $px={22} $py={21}>Quote Lines</Entity>
    <Entity $x={828} $y={279} $w={172} $h={64} $px={18} $py={9}>Product</Entity>
    <Ink width="1221" height="474" viewBox="0 0 1221 474" fill="none" stroke="#000" strokeWidth="3" strokeLinecap="round" strokeLinejoin="round">
      {ink.map((d) => <path key={d} d={d} />)}
      <path d="M557 318V348" strokeWidth="5" />
      <rect x="88.500" y="12.500" width="1016" height="443" strokeLinejoin="miter" />
      <rect x="88.500" y="12.500" width="1016" height="443" stroke="#e8e8e8" strokeWidth="1" strokeDasharray="3 2" strokeLinecap="butt" />
      <g fill="#fff" stroke="none">
        <path d="M87 11h2v3h-2zM596 11h2v3h-2zM1104 11h2v3h-2zM87 233h3v2h-3zM1103 233h3v2h-3zM87 454h2v3h-2zM596 454h2v3h-2z" />
      </g>
      <path d="M1100.500 451.500h3v3h-3zM1106.500 457.500h3v3h-3z" stroke="#666" strokeWidth="1" />
    </Ink>
  </Canvas>
);

const PaintWindow = () => (
  <Paint>
    <PaintTitle>
      <Icon w={12}>
        <path d="M6 1Q11 1 11 5Q11 8 8 8L7 11Q5 12 4 9Q1 8 1 5Q2 1 6 1z" fill="#1da0dc" stroke="#1681c4" />
        <circle cx="4" cy="4" r="1" fill="#f4b63a" stroke="none" /><circle cx="8" cy="4" r="1.300" fill="#56c596" stroke="none" />
      </Icon>
      <span>Untitled - Paint</span>
      <PaintWindowButtons>
        <button aria-label="Minimize shared window"><Icon w={8} sw={1.4}><path d="M0 4h8" /></Icon></button>
        <button aria-label="Restore shared window"><Icon w={8} sw={1.2}><rect x="1" y="2" width="5" height="5" rx="1" /><path d="M3 .8h3q1.500 0 1.500 1.500V5" /></Icon></button>
        <button aria-label="Close shared window"><Cross s={9} sw={1.1} /></button>
      </PaintWindowButtons>
    </PaintTitle>
    <PaintMenu>
      <PaintTab>File</PaintTab>
      <PaintTab>View</PaintTab>
      <SaveButton aria-label="Save">
        <Icon w={12} sw={1.2}><path d="M1 2.500Q1 1 2.500 1H9l2 2v6.500Q11 11 9.500 11h-7Q1 11 1 9.500zM3.500 1v3h4V1M3.500 11V7h5v4" /></Icon>
      </SaveButton>
      <QuickButton aria-label="Undo"><Icon w={12} h={13} sw={1.2}><path d="M1 1v4.500h4.500M1.500 5Q4 1 8 1.500Q12 3 10.500 6.500L5 12" /></Icon></QuickButton>
      <QuickButton $dim aria-label="Redo"><Icon w={12} h={13}><path d="M11 1v4.500H6.500M10.500 5Q8 1 4 1.500Q0 3 1.500 6.500L8 12" /></Icon></QuickButton>
      <Push aria-label="Share image"><Icon w={14}><circle cx="5" cy="5.500" r="2" /><path d="M1.500 9.500h7q0 4-3.500 4t-3.500-4zM8 1h5v4h-3l-2 2z" /></Icon></Push>
    </PaintMenu>
    <PaintRibbon />
    <Workspace>
      <Drawing />
      <VerticalScroll />
    </Workspace>
    <HorizontalScroll />
    <StatusBar>
      <Status $w={101}><Icon w={9} h={10}><path d="M1.500 1v8.500L4.500 7H8z" /></Icon>1682, 759px</Status>
      <Status $w={102}><Icon w={11} h={10}><rect x="1" y="1" width="9" height="8" strokeDasharray="2 1.500" /></Icon>1549 × 675px</Status>
      <Status $w={102} $last><Icon w={11} h={10}><path d="M2.500 0v10M8.500 0v10M1 1.500h9M1 8.500h9" /></Icon>3786 × 1672px</Status>
      <ZoomRow>
        <span>100%</span>
        <Icon w={16} h={10}><path d="M5 5h9" /></Icon>
        <Slider type="range" min="0" max="100" defaultValue="37" />
        <Icon w={10}><path d="M0 5h10M5 0v10" /></Icon>
      </ZoomRow>
      <Watermark><WebexMark size={50} /></Watermark>
    </StatusBar>
    <Behind>
      <LineNo>178</LineNo>
      <EditorPane>
        <EditorLeft />
        <EditorRight>{'}'}</EditorRight>
      </EditorPane>
    </Behind>
  </Paint>
);

const ParticipantsPanel = () => (
  <Panel>
    <PanelHead>
      <button aria-label="Collapse"><Chevron w={20} h={11} sw={1.5} /></button>
      <PanelTitle>Participants (50)</PanelTitle>
      <PanelActions>
        <button aria-label="Pop out">
          <Icon w={20} sw={1.5}><path d="M8 2H4Q2 2 2 4v12q0 2 2 2h12q2 0 2-2v-4M12 1.500h6.500V8M18 2l-6 6" /></Icon>
        </button>
        <button aria-label="Close panel"><Cross s={17} sw={1.5} /></button>
      </PanelActions>
    </PanelHead>
    <SearchRow>
      <SearchBox>
        <Icon w={17} sw={1.4}><circle cx="8" cy="8" r="7" /><path d="M13 13l3 3" /></Icon>
        <SearchInput type="search" placeholder="Search" aria-label="Search" />
      </SearchBox>
      <button aria-label="Sort">
        <Icon w={22} h={20} sw={1.5}><path d="M6 1v17M1.500 14L6 18.500L10.500 14M16 19V2M11.500 6L16 1.500L20.500 6" /></Icon>
      </button>
    </SearchRow>
    <ListArea>
      <People>
        {people.map((p, i) => (
          <Person key={p.id} $me={i === 0}>
            <Avatar $me={i === 0}>
              {p.id}
              {p.live && (
                <Sharing><Icon w={11} sw={2} color="#1b1b1b"><path d="M5.500 10V1.500M2 5l3.500-3.500L9 5" /></Icon></Sharing>
              )}
            </Avatar>
            <Device>{p.phone ? <PhoneIcon /> : <HeadsetIcon />}</Device>
            <Who>
              {p.name}
              {p.role && <small>{p.role}</small>}
            </Who>
            {p.live ? <MicOnIcon /> : <MicOffIcon />}
          </Person>
        ))}
      </People>
      <ScrollTrack>
        <Chevron w={15} h={9} up sw={1.2} />
        <ScrollThumb />
        <Chevron w={15} h={9} sw={1.2} />
      </ScrollTrack>
    </ListArea>
  </Panel>
);

const SystemBar = () => (
  <Taskbar>
    <Weather>
      <CloudIcon />
      <div><span>83°F</span><span>Cloudy</span></div>
    </Weather>
    <Apps>
      {apps.map(([name, icon, open]) => (
        <AppButton key={name} aria-label={name} $open={open}>{icon}</AppButton>
      ))}
    </Apps>
    <Tray>
      <TrayButton $w={40} aria-label="Hidden icons"><Chevron w={19} h={10} up sw={1.5} /></TrayButton>
      <TrayButton $w={44} $on aria-label="Microphone">
        <Icon w={24} sw={1.6}><rect x="8.500" y="1" width="7" height="14" rx="3.500" /><path d="M4.500 11q0 8 7.500 8t7.500-8M12 19v4M1 1l22 22" /></Icon>
      </TrayButton>
      <TrayButton $w={36} aria-label="Wi-Fi">
        <Icon w={24} h={18} sw={1.7}><path d="M1 6.500Q12-3.500 23 6.500M4.500 10Q12 3 19.500 10M8 13Q12 9.500 16 13" /><circle cx="12" cy="15.500" r="1.200" fill="currentColor" /></Icon>
      </TrayButton>
      <TrayButton $w={36} aria-label="Volume">
        <Icon w={24} h={20} sw={1.5}><path d="M1 7h4l5-5v16l-5-5H1zM13.500 7q2 3 0 6M17 4q4.500 6 0 12M20.500 1.500q5.500 8.500 0 17" /></Icon>
      </TrayButton>
      <TrayButton $w={36} aria-label="Battery">
        <Icon w={24} h={18} sw={1.6}><path d="M9 3h8.500q2.500 0 2.500 2v9q0 2-2.500 2H8q-2 0-2-2v-2" /><rect x="9" y="6" width="8.500" height="7.500" fill="currentColor" stroke="none" /><path d="M22 7.500v4M2 1v3M6 1v3" strokeWidth="2" /><path d="M.8 4h6.400v3Q7 9 4 9T.8 7z" fill="currentColor" /><path d="M4 9v5" /></Icon>
      </TrayButton>
      <DateTime>3:56 PM<br />11/3/2022</DateTime>
    </Tray>
  </Taskbar>
);

export default function App() {
  return (
    <>
      <GlobalStyle />
      <Shell>
        <TitleBar>
          <TitleItem $gap={34}><WebexMark size={24} flat />Webex</TitleItem>
          <TitleItem $gap={48}>
            <Icon w={18} h={20} sw={1.4}><path d="M9 1L17 3.500V9Q17 16 9 19Q1 16 1 9V3.500z" /><path d="M9 4l5 1.500V9q0 5-5 7.500Q4 14 4 9V5.500z" fill="currentColor" stroke="none" /></Icon>
            Meeting Info
          </TitleItem>
          <TitleItem $gap={0}>Hide Menu Bar<Chevron w={20} h={11} up sw={1.4} /></TitleItem>
          <Clock>02:28:25</Clock>
          <Signal><SignalBar $h={4} /><SignalBar $h={8} /><SignalBar $h={13} /></Signal>
          <WindowButtons>
            <button aria-label="Minimize"><Icon w={16}><path d="M0 8h16" /></Icon></button>
            <button aria-label="Restore"><Icon w={16}><rect x="1" y="4" width="11" height="11" /><path d="M4 4V1h11v11h-3" /></Icon></button>
            <button aria-label="Close"><Cross s={16} sw={1.2} /></button>
          </WindowButtons>
        </TitleBar>
        <MenuBar>
          {menus.map((m) => (
            <button key={m}><Hot>{m[0]}</Hot>{m.slice(1)}</button>
          ))}
        </MenuBar>
        <Body>
          <Stage>
            <Strip>
              {tiles.map((t) => (
                <Tile key={t.name} $active={t.active}>
                  <TileName>{t.name}</TileName>
                  {t.role && <TileRole>{t.role}</TileRole>}
                  {t.active && (
                    <TileBadge><Icon w={22} h={18} sw={1.5}><rect x="1" y="1" width="20" height="16" rx="3" /><path d="M11 12.500V6M8.500 8L11 5.500L13.500 8" /></Icon></TileBadge>
                  )}
                </Tile>
              ))}
            </Strip>
            <ViewBar>
              <span>Viewing Shaik's screen</span>
              <ZoomGroup>
                <button aria-label="Zoom out"><Icon w={18} sw={1.6}><path d="M1 9h16" /></Icon></button>
                65%
                <button aria-label="Zoom in"><Icon w={18} sw={1.6}><path d="M1 9h16M9 1v16" /></Icon></button>
              </ZoomGroup>
              <ViewTools>
                <button aria-label="Annotate"><Icon w={20} h={18} sw={1.6}><path d="M1 10Q6 3 9 1.500Q12 1 10.500 4L6.500 11Q6 14 8.500 12L13 7Q15.500 5.500 15 8.500L12.500 13Q12 16 14.500 14.500Q18 11 18.500 13L17 16.500" /></Icon></button>
                <button aria-label="Remote control"><Icon w={22} h={19} sw={1.6}><rect x="1" y="1" width="20" height="14" rx="3" /><path d="M8 15v3h7v-3" /><path d="M13 5v6l1.500-1.500h2.500z" /></Icon></button>
              </ViewTools>
            </ViewBar>
            <ShareFrame><PaintWindow /></ShareFrame>
          </Stage>
          <ParticipantsPanel />
        </Body>
        <SystemBar />
      </Shell>
    </>
  );
}
